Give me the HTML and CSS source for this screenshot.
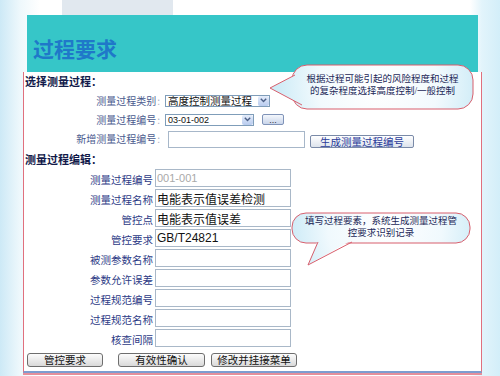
FILE: index.html
```html
<!DOCTYPE html>
<html lang="zh-CN">
<head>
  <meta charset="UTF-8">
  <meta name="viewport" content="width=device-width, initial-scale=1.0">
  <title>过程要求</title>
  <link rel="stylesheet" href="styles.css">
</head>
<body>
  <div class="slide">
    <div class="tab"></div>
    <div class="banner">
      <h1>过程要求</h1>
    </div>

    <div class="panel">
      <h2>选择测量过程：</h2>
      <div class="pick">
        <label>测量过程类别<span class="colon">:</span></label>
        <div class="field">
          <div class="select wide">
            <span class="value">高度控制测量过程</span>
            <span class="arrow"><svg width="7" height="5" viewBox="0 0 7 5"><path d="M0.8 0.8 L3.5 3.6 L6.2 0.8" fill="none" stroke="#4b5f86" stroke-width="1.4"/></svg></span>
          </div>
        </div>

        <label>测量过程编号<span class="colon">:</span></label>
        <div class="field">
          <div class="select narrow">
            <span class="value num">03-01-002</span>
            <span class="arrow"><svg width="7" height="5" viewBox="0 0 7 5"><path d="M0.8 0.8 L3.5 3.6 L6.2 0.8" fill="none" stroke="#4b5f86" stroke-width="1.4"/></svg></span>
          </div>
          <button class="dots">...</button>
        </div>

        <label>新增测量过程编号<span class="colon">:</span></label>
        <div class="field bottom">
          <input type="text" class="new-code">
          <button class="gen">生成测量过程编号</button>
        </div>
      </div>

      <h2 class="second">测量过程编辑：</h2>
      <div class="edit">
        <label>测量过程编号</label>
        <input type="text" class="muted" value="001-001">
        <label>测量过程名称</label>
        <input type="text" value="电能表示值误差检测">
        <label>管控点</label>
        <input type="text" value="电能表示值误差">
        <label>管控要求</label>
        <input type="text" value="GB/T24821">
        <label>被测参数名称</label>
        <input type="text">
        <label>参数允许误差</label>
        <input type="text">
        <label>过程规范编号</label>
        <input type="text">
        <label>过程规范名称</label>
        <input type="text">
        <label>核查间隔</label>
        <input type="text">
      </div>

      <div class="actions">
        <button>管控要求</button>
        <button>有效性确认</button>
        <button>修改并挂接菜单</button>
      </div>

      <div class="callout first">
        <svg width="207" height="48" viewBox="0 0 207 48">
          <defs>
            <radialGradient id="fillA" gradientUnits="userSpaceOnUse" cx="110" cy="22" r="100">
              <stop offset="0" stop-color="#ffffff"/>
              <stop offset="0.6" stop-color="#f2fafd"/>
              <stop offset="1" stop-color="#cfecf7"/>
            </radialGradient>
          </defs>
          <rect x="24" y="2" width="181" height="44" rx="15" fill="url(#fillA)" stroke="#d85f6d"/>
          <polygon points="2,25 27,12 34,42" fill="url(#fillA)"/>
          <polyline points="27,12 2,25 34,42" fill="none" stroke="#d85f6d"/>
        </svg>
        <p>根据过程可能引起的风险程度和过程<br>的复杂程度选择高度控制/一般控制</p>
      </div>

      <div class="callout second">
        <svg width="182" height="56" viewBox="0 0 182 56">
          <defs>
            <radialGradient id="fillB" gradientUnits="userSpaceOnUse" cx="95" cy="16" r="95">
              <stop offset="0" stop-color="#ffffff"/>
              <stop offset="0.6" stop-color="#f0f9fd"/>
              <stop offset="1" stop-color="#cdebf7"/>
            </radialGradient>
          </defs>
          <rect x="2" y="2" width="178" height="30" rx="14" fill="url(#fillB)" stroke="#d85f6d"/>
          <polygon points="18,54 28,29 62,29" fill="url(#fillB)"/>
          <polyline points="28,31 18,54 62,31" fill="none" stroke="#d85f6d"/>
        </svg>
        <p>填写过程要素，系统生成测量过程管<br>控要求识别记录</p>
      </div>
    </div>
  </div>
</body>
</html>
```

FILE: styles.css
```css
* {
  margin: 0;
  padding: 0;
  box-sizing: border-box;
}

body {
  font-family: 'Liberation Sans', 'Noto Sans CJK SC', sans-serif;
  background-color: #fff;
}

.slide {
  width: 500px;
  height: 376px;
  overflow: hidden;
  background: linear-gradient(90deg, #cde9f6 0, #eef8fc 20px, #fff 40px, #fff 470px, #e2f4fb 482px, #d3eef9 500px);
}

.tab {
  margin-left: 62px;
  width: 111px;
  height: 15px;
  background-color: #e1e8ef;
}

.banner {
  margin-left: 27px;
  width: 451px;
  height: 57px;
  background-color: #36c6c8;
  display: flex;
  align-items: flex-end;
  padding: 0 0 12px 6px;
}

h1 {
  font-family: 'Noto Sans CJK SC', sans-serif;
  font-size: 21px;
  line-height: 24px;
  font-weight: bold;
  color: #1f78c9;
}

.panel {
  position: relative;
  margin-left: 23px;
  width: 459px;
  height: 301px;
  background-color: #fff;
  border-left: 1px solid #e0707e;
  border-right: 1px solid #e0707e;
  border-bottom: 2px solid #7d9dd0;
  box-shadow: 0 2px 0 #e58f9b;
  padding-top: 2px;
}

h2 {
  font-family: 'Noto Sans CJK SC', sans-serif;
  font-size: 11px;
  line-height: 14px;
  font-weight: bold;
  color: #121a4a;
  margin-left: 1px;
}

h2.second {
  margin-top: 3px;
}

.pick {
  display: grid;
  grid-template-columns: 136px auto;
  grid-template-rows: 19px 19px 20px;
  column-gap: 4px;
  align-items: center;
  margin-top: 3px;
}

.pick label {
  font-family: 'Noto Sans CJK SC', sans-serif;
  font-size: 10px;
  line-height: 12px;
  color: #4a5a8e;
  text-align: right;
}

.pick .colon {
  color: #a8b0c4;
  margin-left: 1px;
}

.field {
  display: flex;
  align-items: center;
  gap: 8px;
  padding-left: 1px;
}

.field.bottom {
  align-items: flex-end;
  gap: 5px;
  padding-left: 4px;
}

.select {
  height: 12px;
  border: 1px solid #7f9db9;
  background-color: #fff;
  display: flex;
  align-items: center;
  justify-content: space-between;
}

.select.wide {
  width: 105px;
}

.select.narrow {
  width: 89px;
}

.select .value {
  font-family: 'Noto Sans CJK SC', sans-serif;
  font-size: 10.5px;
  line-height: 10px;
  color: #111;
  padding-left: 2px;
}

.select .value.num {
  font-family: 'Liberation Sans', sans-serif;
  font-size: 9px;
}

.select .arrow {
  width: 11px;
  height: 10px;
  border-radius: 2px;
  background: linear-gradient(#e4ecfa, #b8cbee);
  display: flex;
  align-items: center;
  justify-content: center;
}

.dots {
  width: 22px;
  height: 11px;
  border: 1px solid #7f93b8;
  border-radius: 2px;
  background: linear-gradient(#f4f7fc, #c9d5ea);
  font-size: 9px;
  line-height: 6px;
  color: #333;
}

.new-code {
  width: 137px;
  height: 17px;
  border: 1px solid #a7b7c9;
}

.gen {
  width: 104px;
  height: 13px;
  border: 1px solid #7a8aa8;
  border-radius: 2px;
  background: linear-gradient(#ffffff, #dde3ec);
  font-family: 'Noto Sans CJK SC', sans-serif;
  font-size: 10.5px;
  line-height: 11px;
  color: #2a3c9a;
}

.edit {
  display: grid;
  grid-template-columns: 129px 136px;
  grid-auto-rows: 18px;
  column-gap: 2px;
  row-gap: 2px;
  margin-top: 3px;
}

.edit label {
  font-family: 'Noto Sans CJK SC', sans-serif;
  font-size: 10.5px;
  line-height: 18px;
  padding-top: 2px;
  color: #2d3b86;
  text-align: right;
}

.edit input {
  height: 18px;
  border: 1px solid #a9b8c8;
  padding: 0 1px;
  font-family: 'Liberation Sans', 'Noto Sans CJK SC', sans-serif;
  font-size: 12px;
  color: #111;
  background-color: #fff;
}

.edit input.muted {
  font-size: 11px;
  color: #a9a9a9;
}

input:focus {
  outline: none;
}

.actions {
  display: flex;
  gap: 6px;
  margin: 6px 0 0 3px;
}

.actions button {
  height: 14px;
  border: 1px solid #6e6e6e;
  border-radius: 3px;
  background: linear-gradient(#fcfcfc, #d9d9d9);
  font-family: 'Noto Sans CJK SC', sans-serif;
  font-size: 10.5px;
  line-height: 12px;
  color: #111;
}

.actions button:nth-child(1) {
  width: 76px;
  margin-right: 9px;
}

.actions button:nth-child(2) {
  width: 87px;
}

.actions button:nth-child(3) {
  width: 86px;
}

.callout {
  position: absolute;
}

.callout svg {
  display: block;
}

.callout p {
  position: absolute;
  font-family: 'Liberation Serif', 'Noto Sans CJK SC', serif;
  font-size: 9.5px;
  line-height: 12px;
  color: #1c2858;
  text-align: center;
  white-space: nowrap;
}

.callout.first {
  left: 244px;
  top: -9px;
}

.callout.first p {
  left: 24px;
  width: 181px;
  top: 10px;
}

.callout.second {
  left: 266px;
  top: 139px;
}

.callout.second p {
  left: 2px;
  width: 178px;
  top: 4px;
}
```
